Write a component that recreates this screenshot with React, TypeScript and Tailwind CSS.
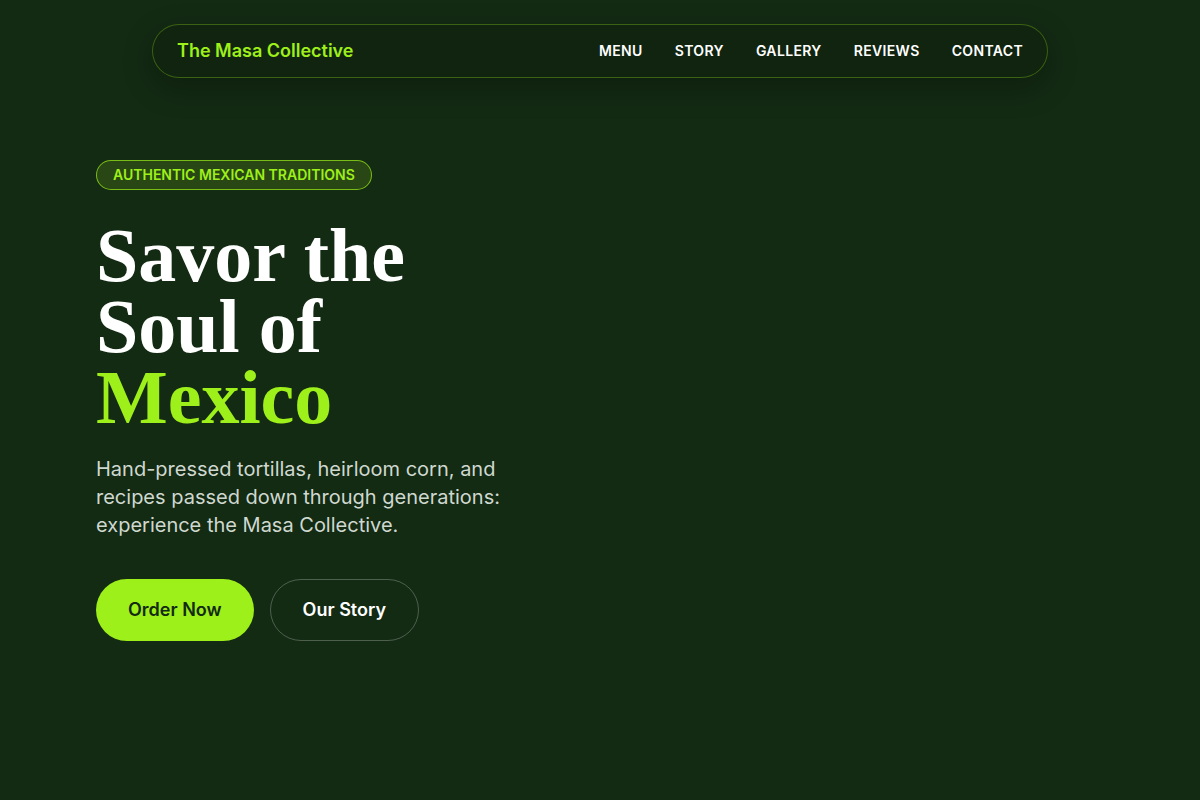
import React from 'react';

const navLinks = ['Menu', 'Story', 'Gallery', 'Reviews', 'Contact'];

export default function App() {
  return (
    <div
      className="min-h-screen bg-[#132a13] text-white"
      style={{ fontFamily: 'Inter, "Noto Sans", sans-serif' }}
    >
      {/* Navbar */}
      <div className="pt-6 flex justify-center">
        <nav className="w-[896px] h-[54px] flex items-center justify-between px-6 rounded-full border border-[#9ef01a]/30 bg-[#11240f] shadow-[0_10px_30px_rgba(0,0,0,0.25)]">
          <span className="text-lg font-semibold text-[#9ef01a]">The Masa Collective</span>
          <ul className="flex items-center gap-8">
            {navLinks.map((link) => (
              <li key={link} className="text-sm font-semibold uppercase tracking-wide text-white">
                {link}
              </li>
            ))}
          </ul>
        </nav>
      </div>

      {/* Hero */}
      <section className="px-24 pt-[82px]">
        <span className="inline-flex items-center h-[30px] px-4 rounded-full border border-[#9ef01a]/70 bg-[#9ef01a]/15 text-sm font-semibold uppercase text-[#9ef01a]">
          Authentic Mexican Traditions
        </span>
        <h1
          className="mt-[30px] text-[76px] leading-[71px] font-bold"
          style={{ fontFamily: '"Liberation Serif", "DejaVu Serif", serif' }}
        >
          <span className="block">Savor the</span>
          <span className="block">Soul of</span>
          <span className="block text-[#9ef01a]">Mexico</span>
        </h1>
        <p className="mt-[22px] max-w-[420px] text-xl leading-7 text-[#cfd8cf]">
          Hand-pressed tortillas, heirloom corn, and recipes passed down through generations: experience the Masa
          Collective.
        </p>
        <div className="mt-10 flex items-center gap-4">
          <button className="h-[62px] px-8 rounded-full bg-[#9ef01a] text-[#132a13] text-lg font-semibold">
            Order Now
          </button>
          <button className="h-[62px] px-8 rounded-full border border-white/25 text-white text-lg font-semibold">
            Our Story
          </button>
        </div>
      </section>
    </div>
  );
}
